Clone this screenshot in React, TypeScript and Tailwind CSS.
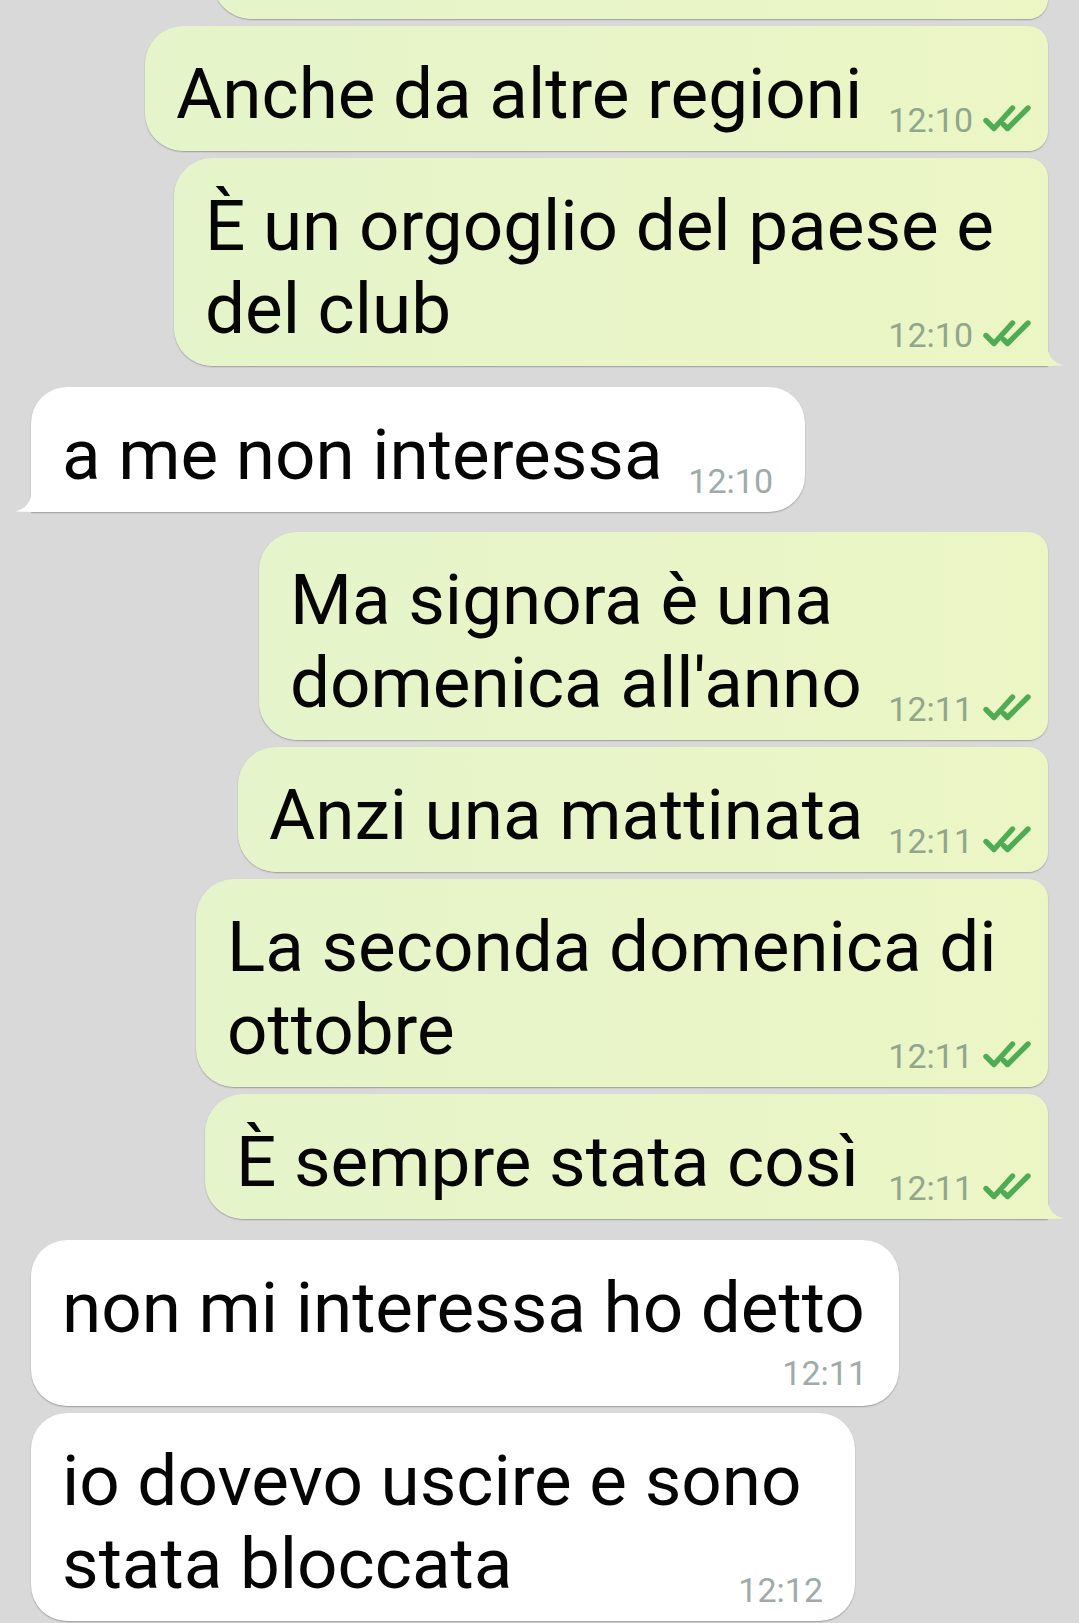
type Msg = {
  lines: string[]
  time: string
  out: boolean
  tail?: boolean
  metaBelow?: boolean
  w: string
  mt: string
}

const messages: Msg[] = [
  { lines: ['Anche da altre regioni'], time: '12:10', out: true, w: 'w-[903px]', mt: 'mt-[7px]' },
  { lines: ['È un orgoglio del paese e', 'del club'], time: '12:10', out: true, tail: true, w: 'w-[874px]', mt: 'mt-[7px]' },
  { lines: ['a me non interessa'], time: '12:10', out: false, tail: true, w: 'w-[774px]', mt: 'mt-[21px]' },
  { lines: ['Ma signora è una', "domenica all'anno"], time: '12:11', out: true, w: 'w-[789px]', mt: 'mt-[20px]' },
  { lines: ['Anzi una mattinata'], time: '12:11', out: true, w: 'w-[810px]', mt: 'mt-[7px]' },
  { lines: ['La seconda domenica di', 'ottobre'], time: '12:11', out: true, w: 'w-[852px]', mt: 'mt-[7px]' },
  { lines: ['È sempre stata così'], time: '12:11', out: true, tail: true, w: 'w-[843px]', mt: 'mt-[7px]' },
  { lines: ['non mi interessa ho detto'], time: '12:11', out: false, metaBelow: true, w: 'w-[868px]', mt: 'mt-[21px]' },
  { lines: ['io dovevo uscire e sono', 'stata bloccata'], time: '12:12', out: false, w: 'w-[824px]', mt: 'mt-[7px]' },
]

function Ticks() {
  return (
    <svg width="48" height="27" viewBox="0 0 48 27" className="mb-[2px] shrink-0" fill="none" stroke="#4fac55" strokeWidth={5.4} strokeLinecap="round" strokeLinejoin="round">
      <polyline points="3,15.5 11,23.5 29.5,3" />
      <polyline points="20.5,19.5 24.5,23.5 45,3" />
    </svg>
  )
}

function Meta({ m }: { m: Msg }) {
  return (
    <div className={`flex items-baseline gap-[10px] text-[34px] leading-none ${m.out ? 'text-[#91a68a]' : 'text-[#a0aaa9]'}`}>
      <span>{m.time}</span>
      {m.out && <Ticks />}
    </div>
  )
}

function Bubble({ m }: { m: Msg }) {
  const side = m.out
    ? `self-end mr-[31px] rounded-l-[38px] rounded-r-[20px] pr-[17px] bg-gradient-to-r from-[#e5f4ca] to-[#ecf6c5] ${m.tail ? 'rounded-br-none' : ''}`
    : `self-start ml-[31px] rounded-[36px] pr-[32px] bg-white ${m.tail ? 'rounded-bl-none' : ''}`

  return (
    <div className={`relative ${m.w} ${m.mt} ${side} pl-[31px] pt-[26px] pb-[16px] shadow-[0_1px_1.5px_rgba(0,0,0,0.28)]`}>
      {m.metaBelow ? (
        <div className="flex flex-col">
          <div className="whitespace-nowrap text-[71px] leading-[83px] text-[#050505]">{m.lines[0]}</div>
          <div className="mt-[7px] flex justify-end">
            <Meta m={m} />
          </div>
        </div>
      ) : (
        <div className="grid">
          <div className="col-start-1 row-start-1 whitespace-nowrap text-[71px] leading-[83px] text-[#050505]">
            {m.lines.map((l, i) => (
              <div key={i}>{l}</div>
            ))}
          </div>
          <div className="col-start-1 row-start-1 mb-[-2px] self-end justify-self-end">
            <Meta m={m} />
          </div>
        </div>
      )}

      {m.tail && m.out && (
        <svg className="absolute bottom-0 right-[-16px]" width="17" height="23" viewBox="0 0 17 23">
          <path d="M0 0 C0.5 13 6 20 17 22.5 L0 23 Z" fill="#ecf6c5" />
        </svg>
      )}
      {m.tail && !m.out && (
        <svg className="absolute bottom-0 left-[-17px]" width="18" height="23" viewBox="0 0 18 23">
          <path d="M18 0 C17.5 13 12 20 1 22.5 L18 23 Z" fill="#ffffff" />
        </svg>
      )}
    </div>
  )
}

export default function App() {
  return (
    <main
      className="flex h-[1623px] flex-col overflow-hidden bg-[#d9d9d9]"
      style={{ fontFamily: 'Roboto, "Noto Sans", sans-serif' }}
    >
      {/* bubble above, cut off by the top of the screen */}
      <div className="mr-[31px] -mt-[106px] h-[125px] w-[835px] shrink-0 self-end rounded-l-[38px] rounded-r-[20px] bg-gradient-to-r from-[#e5f4ca] to-[#ecf6c5] shadow-[0_1px_1.5px_rgba(0,0,0,0.28)]" />

      {messages.map((m, i) => (
        <Bubble key={i} m={m} />
      ))}
    </main>
  )
}
